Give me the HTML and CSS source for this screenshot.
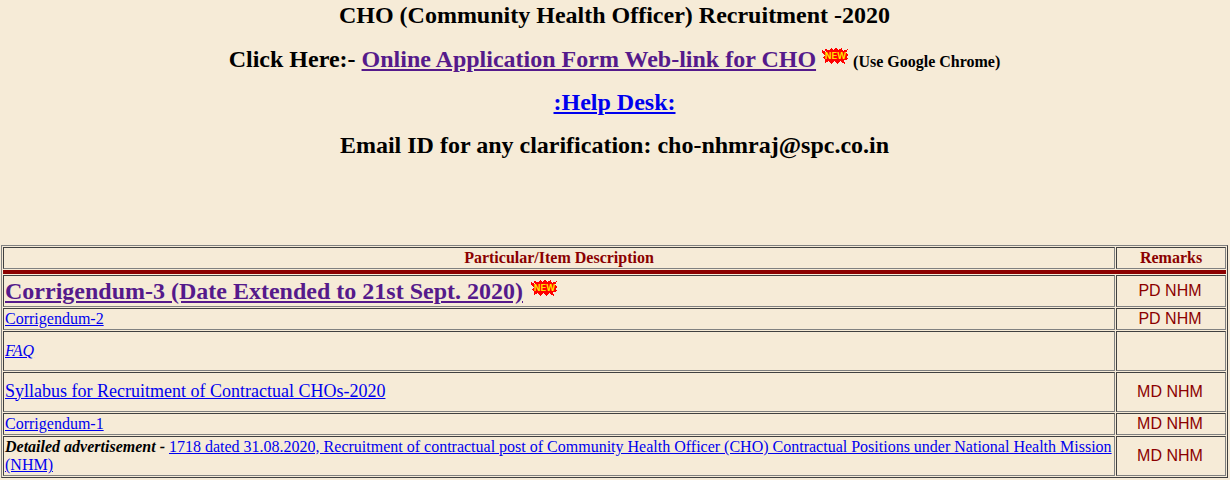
FILE: index.html
```html
<!DOCTYPE html>
<html lang="en">
<head>
<meta charset="utf-8">
<title>CHO Recruitment 2020</title>
<link rel="stylesheet" href="styles.css">
</head>
<body>
<h2 class="head click">CHO (Community Health Officer) Recruitment -2020</h2>
<h2 class="head click">Click Here:- <a class="visited" href="#a">Online Application Form Web-link for CHO</a> <svg class="burst" viewBox="0 0 27 16" width="27" height="16"><polygon class="burst-shape" points="0,2 4,4 3,1 7,2 9,0 11,2 14,0 16,2 20,0 21,3 26,1 24,5 27,7 24,9 27,11 22,12 23,16 18,13 15,16 12,13 9,16 7,13 3,15 3,11 0,10 3,7 0,5"/><text class="burst-text" x="13.5" y="11" text-anchor="middle">NEW</text></svg><span class="note"> (Use Google Chrome)</span></h2>
<h2 class="head help"><a href="#b">:Help Desk:</a></h2>
<h2 class="head last">Email ID for any clarification: cho-nhmraj@spc.co.in</h2>
<table class="grid">
<thead>
<tr class="row-head"><th class="col-main">Particular/Item Description</th><th class="col-side">Remarks</th></tr>
<tr class="row-rule"><td colspan="2"></td></tr>
</thead>
<tbody>
<tr class="row-a"><td class="big"><a class="visited" href="#c">Corrigendum-3 (Date Extended to 21st Sept. 2020)</a> <svg class="burst burst-b" viewBox="0 0 27 16" width="27" height="16"><polygon class="burst-shape" points="0,2 4,4 3,1 7,2 9,0 11,2 14,0 16,2 20,0 21,3 26,1 24,5 27,7 24,9 27,11 22,12 23,16 18,13 15,16 12,13 9,16 7,13 3,15 3,11 0,10 3,7 0,5"/><text class="burst-text" x="13.5" y="11" text-anchor="middle">NEW</text></svg></td><td class="remark">PD NHM</td></tr>
<tr><td><a href="#d">Corrigendum-2</a></td><td class="remark">PD NHM</td></tr>
<tr class="row-tall"><td><a class="ital" href="#e">FAQ</a></td><td class="remark"></td></tr>
<tr class="row-tall"><td class="mid"><a href="#f">Syllabus for Recruitment of Contractual CHOs-2020</a></td><td class="remark">MD NHM</td></tr>
<tr><td><a href="#g">Corrigendum-1</a></td><td class="remark">MD NHM</td></tr>
<tr><td><b class="lead">Detailed advertisement - </b><a href="#h">1718 dated 31.08.2020, Recruitment of contractual post of Community Health Officer (CHO) Contractual Positions under National Health Mission (NHM)</a></td><td class="remark">MD NHM</td></tr>
</tbody>
</table>
</body>
</html>
```
FILE: styles.css
```css
html, body {
  background: #f6ebd7;
}
body {
  margin: 2px 2px 0 1px;
  font-family: "Liberation Serif", serif;
  color: #000;
}
.head {
  margin: 0 0 17px;
  font-size: 24px;
  font-weight: bold;
  text-align: center;
}
.head:nth-of-type(2) {
  margin-bottom: 16px;
}
.head.help {
  margin-bottom: 16px;
}
.head.last {
  margin-bottom: 86px;
}
a {
  color: #0000ee;
}
a.visited {
  color: #551a8b;
}
.note {
  font-size: 16px;
}
.burst {
  vertical-align: 3px;
}
.burst-b {
  margin-left: 2px;
}
.burst-shape {
  fill: #ff0000;
  shape-rendering: crispEdges;
}
.burst-text {
  font-family: "DejaVu Sans", sans-serif;
  font-size: 9px;
  font-weight: normal;
  fill: #ffff00;
  stroke: #ffff00;
  stroke-width: 0.2px;
}
.grid {
  width: 100%;
  border-collapse: separate;
  border-spacing: 1px;
  border: 1px solid;
  border-color: #808080 #404040 #404040 #808080;
  font-size: 16px;
}
.grid td, .grid th {
  border: 1px solid;
  border-color: #404040 #808080 #808080 #404040;
  padding: 1px;
}
.col-main, .col-side {
  color: #8b0000;
  font-weight: bold;
}
.col-side {
  width: 106px;
}
.row-rule td {
  height: 0;
  padding: 0;
  border: 2px solid #8b0000;
  border-color: #8b0000;
}
.grid td.remark {
  text-align: center;
  color: #8b0000;
  font-family: "Liberation Sans", sans-serif;
  padding-right: 3px;
}
.big {
  font-size: 24px;
  font-weight: bold;
}
.grid td.big {
  padding-top: 2px;
}
.grid td.mid {
  font-size: 18px;
  padding-bottom: 3px;
}
.row-tall {
  height: 40px;
}
.ital, .lead {
  font-style: italic;
}
```
